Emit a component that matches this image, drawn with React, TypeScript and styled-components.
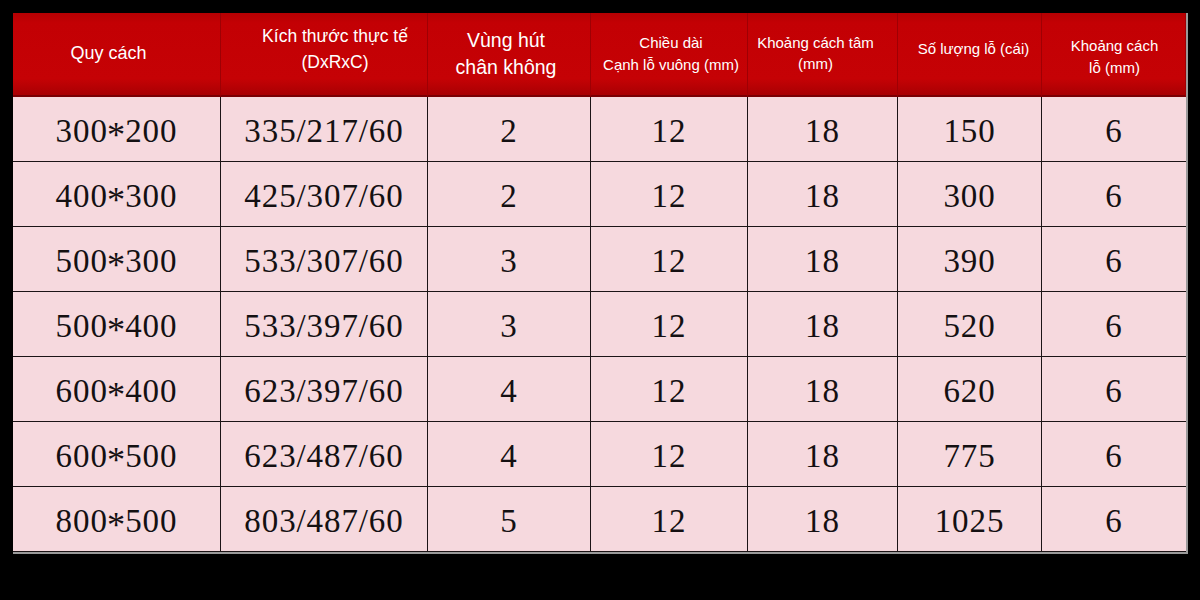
import React from "react";
import styled, { createGlobalStyle } from "styled-components";

const Global = createGlobalStyle`
  html, body { margin: 0; padding: 0; background: #000; }
  body { width: 1200px; height: 600px; overflow: hidden; }
`;

const Page = styled.div`
  width: 1200px;
  height: 600px;
  background: #000;
  padding: 13px 0 0 13px;
  box-sizing: border-box;
`;

const COLS = [208, 207, 163, 157, 150, 144, 144];

const Table = styled.div`
  display: grid;
  grid-template-columns: ${COLS.map((c) => c + "px").join(" ")};
  grid-template-rows: 84px repeat(7, 65px);
  width: 1173px;
  box-sizing: border-box;
  box-shadow: 1px 1px 0 1px #9a9a9a;
`;

const HeadCell = styled.div<{ $dx?: number; $dy?: number; $size?: number; $lh?: number }>`
  display: flex;
  align-items: center;
  justify-content: center;
  text-align: center;
  box-sizing: border-box;
  background: linear-gradient(180deg, #b50002 0%, #c30004 12%, #c50205 80%, #a80003 100%);
  border-right: 1px solid #9e0004;
  border-bottom: 2px solid #7a0004;
  color: #fff;
  font-family: "Liberation Sans", Arial, sans-serif;
  font-size: ${(p) => p.$size ?? 15}px;
  line-height: ${(p) => p.$lh ?? 22}px;
  padding-left: ${(p) => Math.max(0, (p.$dx ?? 0) * 2)}px;
  padding-right: ${(p) => Math.max(0, -(p.$dx ?? 0) * 2)}px;
  padding-top: ${(p) => Math.max(0, (p.$dy ?? 0) * 2)}px;
  padding-bottom: ${(p) => Math.max(0, -(p.$dy ?? 0) * 2)}px;
  &:last-of-type { border-right: none; }
`;

const Label = styled.span`
  display: block;
  white-space: nowrap;
`;

const Cell = styled.div<{ $last?: boolean }>`
  display: flex;
  align-items: center;
  justify-content: center;
  box-sizing: border-box;
  background: #f6d9de;
  border-right: ${(p) => (p.$last ? "none" : "1.5px solid #1c1416")};
  border-bottom: 1.5px solid #1c1416;
  color: #141012;
  font-family: "Liberation Serif", "Times New Roman", serif;
  font-size: 33px;
  letter-spacing: 0.9px;
  padding-top: 4px;
`;

const Star = styled.span`
  display: inline-block;
  font-size: 29px;
  margin: 0 1px;
  transform: translateY(4px) scale(1.25);
`;

const headers: { lines: string[]; dx: number; dy: number; size: number; lh: number }[] = [
  { lines: ["Quy cách"], dx: -8, dy: -1, size: 18, lh: 26 },
  { lines: ["Kích thước thực tế", "(DxRxC)"], dx: 11, dy: -5, size: 17.5, lh: 26 },
  { lines: ["Vùng hút", "chân không"], dx: -3, dy: 0, size: 19.5, lh: 27 },
  { lines: ["Chiều dài", "Cạnh lỗ vuông (mm)"], dx: 2, dy: 0, size: 15, lh: 22 },
  { lines: ["Khoảng cách tâm", "(mm)"], dx: -7, dy: -1, size: 15, lh: 21 },
  { lines: ["Số lượng lỗ (cái)"], dx: 4, dy: -5, size: 15, lh: 22 },
  { lines: ["Khoảng cách", "lỗ (mm)"], dx: 1, dy: 3, size: 15, lh: 22 },
];

const rows: string[][] = [
  ["300*200", "335/217/60", "2", "12", "18", "150", "6"],
  ["400*300", "425/307/60", "2", "12", "18", "300", "6"],
  ["500*300", "533/307/60", "3", "12", "18", "390", "6"],
  ["500*400", "533/397/60", "3", "12", "18", "520", "6"],
  ["600*400", "623/397/60", "4", "12", "18", "620", "6"],
  ["600*500", "623/487/60", "4", "12", "18", "775", "6"],
  ["800*500", "803/487/60", "5", "12", "18", "1025", "6"],
];

function renderValue(v: string) {
  if (!v.includes("*")) return v;
  const [a, b] = v.split("*");
  return (
    <>
      {a}
      <Star>*</Star>
      {b}
    </>
  );
}

export default function App() {
  return (
    <>
      <Global />
      <Page>
        <Table>
          {headers.map((h, i) => (
            <HeadCell key={"h" + i} $dx={h.dx} $dy={h.dy} $size={h.size} $lh={h.lh}>
              <div>
                {h.lines.map((l, j) => (
                  <Label key={j}>{l}</Label>
                ))}
              </div>
            </HeadCell>
          ))}
          {rows.map((r, ri) =>
            r.map((v, ci) => (
              <Cell key={ri + "-" + ci} $last={ci === r.length - 1}>
                {renderValue(v)}
              </Cell>
            ))
          )}
        </Table>
      </Page>
    </>
  );
}
